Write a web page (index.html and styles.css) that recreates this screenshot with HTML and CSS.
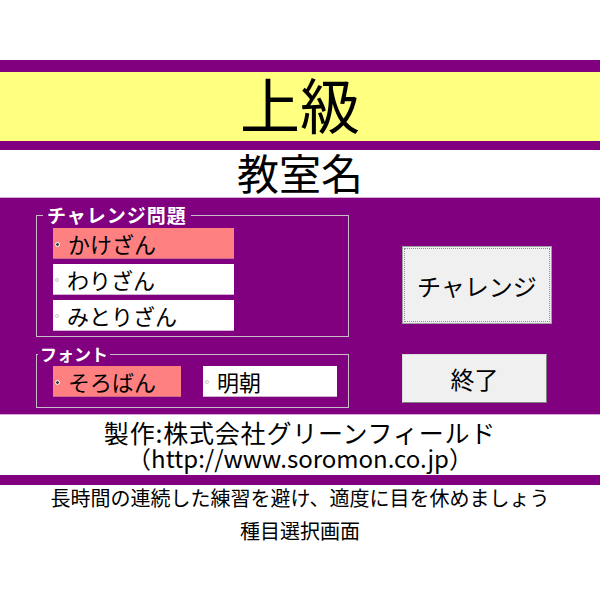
FILE: index.html
```html
<!DOCTYPE html>
<html lang="ja">
<head>
<meta charset="utf-8">
<title>種目選択画面</title>
<link rel="stylesheet" href="styles.css">
</head>
<body>
<div class="page">
  <div class="top-gap"></div>
  <div class="band band-top"></div>
  <div class="title">上級</div>
  <div class="band band-mid"></div>
  <div class="room">教室名</div>
  <div class="panel">
    <div class="groups">
      <fieldset class="group group-problem">
        <legend class="legend legend-problem">チャレンジ問題</legend>
        <div class="opt-list">
          <label class="opt opt-wide selected"><span class="radio on"></span><span class="opt-text">かけざん</span></label>
          <label class="opt opt-wide"><span class="radio"></span><span class="opt-text">わりざん</span></label>
          <label class="opt opt-wide"><span class="radio"></span><span class="opt-text">みとりざん</span></label>
        </div>
      </fieldset>
      <fieldset class="group group-font">
        <legend class="legend legend-font">フォント</legend>
        <div class="font-row">
          <label class="opt opt-soroban selected"><span class="radio on"></span><span class="opt-text">そろばん</span></label>
          <label class="opt opt-mincho"><span class="radio"></span><span class="opt-text">明朝</span></label>
        </div>
      </fieldset>
    </div>
    <div class="buttons">
      <button class="btn btn-challenge">チャレンジ</button>
      <button class="btn btn-end">終了</button>
    </div>
  </div>
  <div class="credits">
    <div class="credit-line credit-maker">製作:株式会社グリーンフィールド</div>
    <div class="credit-line credit-url">（http://www.soromon.co.jp）</div>
  </div>
  <div class="band band-low"></div>
  <div class="notes">
    <div class="note-line">長時間の連続した練習を避け、適度に目を休めましょう</div>
    <div class="note-line note-screen">種目選択画面</div>
  </div>
</div>
</body>
</html>
```
FILE: styles.css
```css
* { box-sizing: border-box; }

html, body {
  margin: 0;
  padding: 0;
  background: #ffffff;
}

body {
  font-family: "Noto Sans CJK JP", "Noto Sans", sans-serif;
  color: #000000;
}

.page {
  width: 600px;
}

.top-gap { height: 60px; }

.band { background: #800080; }
.band-top { height: 12px; }
.band-mid { height: 9px; }
.band-low { height: 10px; }

.title {
  height: 69px;
  background: #ffff80;
  display: flex;
  align-items: center;
  justify-content: center;
  padding-bottom: 7px;
  font-size: 60px;
  line-height: 60px;
}

.room {
  height: 47px;
  display: flex;
  align-items: center;
  justify-content: center;
  padding-bottom: 4px;
  font-size: 42px;
  line-height: 42px;
}

.panel {
  height: 218px;
  background: #800080;
  border-top: 1px solid #d8a8d8;
  border-bottom: 1px solid #d8a8d8;
  display: flex;
  padding: 7px 0 0 36px;
}

.groups {
  display: flex;
  flex-direction: column;
  width: 313px;
}

.group {
  margin: 0;
  min-width: 0;
  width: 313px;
  border: 1px solid #c8bcc8;
}

.group-problem { padding: 3px 0 5px 16px; }
.group-font { padding: 2px 0 10px 16px; margin-top: 7px; }

.legend {
  color: #ffffff;
  font-weight: bold;
  line-height: 20px;
}

.legend-problem {
  font-size: 19px;
  letter-spacing: 1px;
  padding: 0 4px;
  margin-left: -10px;
}

.legend-font {
  font-size: 17px;
  padding: 0 2px;
  margin-left: -15px;
}

.opt-list {
  display: flex;
  flex-direction: column;
  gap: 5px;
}

.font-row {
  display: flex;
  gap: 22px;
}

.opt {
  display: flex;
  align-items: center;
  height: 31px;
  background: #ffffff;
  border-bottom: 1px solid #d0b4d0;
  padding-left: 2px;
}

.opt.selected {
  background: #ff8080;
  border-bottom: 1px solid #c86a8a;
}

.opt-wide { width: 181px; }
.opt-soroban { width: 128px; }
.opt-mincho { width: 134px; }

.radio {
  width: 4px;
  height: 4px;
  border-radius: 50%;
  border: 1px solid #c8c8c8;
  background: #ffffff;
  flex: none;
  margin-top: 2px;
}

.radio.on {
  width: 5px;
  height: 5px;
  border: 1px solid #ffffff;
  background: #404040;
}

.opt-text {
  margin-left: 8px;
  font-size: 22px;
  line-height: 29px;
}

.buttons {
  display: flex;
  flex-direction: column;
  align-items: flex-start;
  gap: 30px;
  margin-left: 53px;
  padding-top: 41px;
}

.btn {
  font-family: "Noto Sans CJK JP", "Noto Sans", sans-serif;
  font-size: 24px;
  color: #000000;
  background: #f0f0f0;
  padding: 0;
  margin: 0;
  border: 1px solid;
  border-color: #dcdcdc #808080 #808080 #dcdcdc;
}

.btn-challenge {
  width: 150px;
  height: 78px;
  border-color: #a0a0a0;
  outline: 1px dotted #909090;
  outline-offset: -3px;
}

.btn-end {
  width: 145px;
  height: 49px;
}

.credits {
  height: 60px;
  padding-top: 4px;
  text-align: center;
  line-height: 26px;
}

.credit-maker {
  font-size: 25px;
  letter-spacing: 0.8px;
}

.credit-url {
  font-size: 24px;
}

.notes {
  text-align: center;
  font-size: 20px;
  line-height: 26px;
}

.note-screen {
  margin-top: 7px;
}
```
